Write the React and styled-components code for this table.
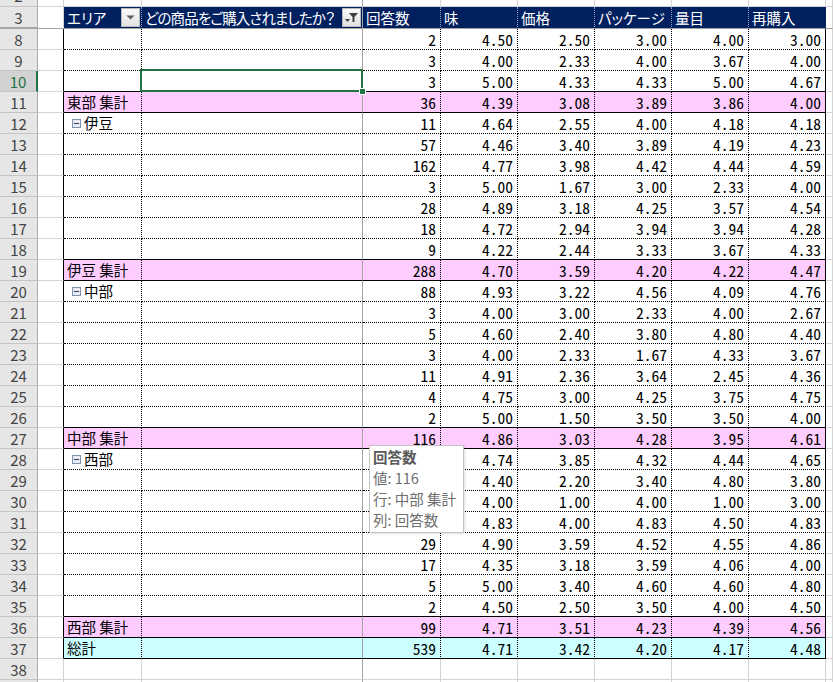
import React from "react";
import styled, { createGlobalStyle, css } from "styled-components";

const GlobalStyle = createGlobalStyle`
  html, body {
    margin: 0;
    padding: 0;
    background: #fff;
    overflow: hidden;
  }
  body {
    font-family: "Noto Sans CJK JP", "Noto Sans", sans-serif;
  }
`;

const COLS = "38px 26px 78px 221px 78px 77px 77px 77px 77px 77px 1fr";

const LINES = {
  grid: "1px solid #d4d4d4",
  dot: "1px dotted #000",
  solid: "1px solid #000",
  freeze: "1px solid #a3a3a3",
  hdot: "1px dotted #8e9abb",
  navy: "1px solid #002060",
};

const HEADERS = ["回答数", "味", "価格", "パッケージ", "量目", "再購入"];

const ROWS = [
  { n: 8, v: "2 4.50 2.50 3.00 4.00 3.00" },
  { n: 9, v: "3 4.00 2.33 4.00 3.67 4.00" },
  { n: 10, v: "3 5.00 4.33 4.33 5.00 4.67" },
  { n: 11, kind: "sub", label: "東部 集計", v: "36 4.39 3.08 3.89 3.86 4.00" },
  { n: 12, kind: "group", label: "伊豆", v: "11 4.64 2.55 4.00 4.18 4.18" },
  { n: 13, v: "57 4.46 3.40 3.89 4.19 4.23" },
  { n: 14, v: "162 4.77 3.98 4.42 4.44 4.59" },
  { n: 15, v: "3 5.00 1.67 3.00 2.33 4.00" },
  { n: 16, v: "28 4.89 3.18 4.25 3.57 4.54" },
  { n: 17, v: "18 4.72 2.94 3.94 3.94 4.28" },
  { n: 18, v: "9 4.22 2.44 3.33 3.67 4.33" },
  { n: 19, kind: "sub", label: "伊豆 集計", v: "288 4.70 3.59 4.20 4.22 4.47" },
  { n: 20, kind: "group", label: "中部", v: "88 4.93 3.22 4.56 4.09 4.76" },
  { n: 21, v: "3 4.00 3.00 2.33 4.00 2.67" },
  { n: 22, v: "5 4.60 2.40 3.80 4.80 4.40" },
  { n: 23, v: "3 4.00 2.33 1.67 4.33 3.67" },
  { n: 24, v: "11 4.91 2.36 3.64 2.45 4.36" },
  { n: 25, v: "4 4.75 3.00 4.25 3.75 4.75" },
  { n: 26, v: "2 5.00 1.50 3.50 3.50 4.00" },
  { n: 27, kind: "sub", label: "中部 集計", v: "116 4.86 3.03 4.28 3.95 4.61" },
  { n: 28, kind: "group", label: "西部", v: "34 4.74 3.85 4.32 4.44 4.65" },
  { n: 29, v: "5 4.40 2.20 3.40 4.80 3.80" },
  { n: 30, v: "1 4.00 1.00 4.00 1.00 3.00" },
  { n: 31, v: "6 4.83 4.00 4.83 4.50 4.83" },
  { n: 32, v: "29 4.90 3.59 4.52 4.55 4.86" },
  { n: 33, v: "17 4.35 3.18 3.59 4.06 4.00" },
  { n: 34, v: "5 5.00 3.40 4.60 4.60 4.80" },
  { n: 35, v: "2 4.50 2.50 3.50 4.00 4.50" },
  { n: 36, kind: "sub", label: "西部 集計", v: "99 4.71 3.51 4.23 4.39 4.56" },
  { n: 37, kind: "total", label: "総計", v: "539 4.71 3.42 4.20 4.17 4.48" },
];

const FILLS = { sub: "#ffccff", total: "#ccffff" };

const Sheet = styled.div`
  position: relative;
  width: 833px;
  height: 682px;
  overflow: hidden;
`;

const Row = styled.div`
  display: grid;
  grid-template-columns: ${COLS};
  height: ${(p) => p.$h}px;
`;

const RowHead = styled.div`
  box-sizing: border-box;
  display: flex;
  align-items: ${(p) => (p.$clip ? "flex-end" : "center")};
  justify-content: center;
  overflow: hidden;
  background: ${(p) => (p.$active ? "#d2d2d2" : "#e6e6e6")};
  color: ${(p) => (p.$active ? "#217346" : "#444")};
  border-right: ${(p) =>
    p.$active ? "2px solid #217346" : "1px solid #ababab"};
  border-bottom: ${(p) =>
    p.$thick ? "2px solid #a6a6a6" : "1px solid #c4c4c4"};
  font-size: 15px;
  line-height: 21px;
`;

const Cell = styled.div`
  box-sizing: border-box;
  display: flex;
  align-items: center;
  justify-content: ${(p) => (p.$num ? "flex-end" : "flex-start")};
  padding: ${(p) => (p.$num ? "0 4px 0 0" : `0 0 0 ${p.$indent || 3}px`)};
  border-right: ${(p) => LINES[p.$r || "grid"]};
  border-bottom: ${(p) => LINES[p.$b || "grid"]};
  background: ${(p) => p.$bg || "#fff"};
  color: #000;
  font-size: ${(p) => (p.$num ? "15.5px" : "14.5px")};
  font-feature-settings: ${(p) => (p.$num ? '"hwid"' : "normal")};
  line-height: 20px;
  white-space: nowrap;
  ${(p) =>
    p.$selected &&
    css`
      position: relative;
      z-index: 2;
      &::after {
        content: "";
        position: absolute;
        top: -2px;
        left: -2px;
        right: -1px;
        bottom: -1px;
        border: 2px solid #217346;
      }
      &::before {
        content: "";
        position: absolute;
        right: -3px;
        bottom: -3px;
        width: 5px;
        height: 5px;
        background: #217346;
        outline: 1px solid #fff;
        z-index: 3;
      }
    `}
`;

const HeadCell = styled(Cell)`
  justify-content: space-between;
  padding: 0 1px 0 3px;
  background: #002060;
  color: #fff;
  font-size: 14.5px;
  font-feature-settings: "palt";
  letter-spacing: ${(p) => (p.$tight ? "-0.9px" : "0")};
`;

const FilterButton = styled.span`
  box-sizing: border-box;
  display: flex;
  align-items: center;
  justify-content: center;
  flex: none;
  width: 19px;
  height: 19px;
  border: 1px solid #b9b9b9;
  background: linear-gradient(#fbfbfb, #e1e1e1);
`;

const Toggle = styled.svg`
  flex: none;
  margin-right: 3px;
`;

const Tip = styled.div`
  position: absolute;
  left: 369px;
  top: 445px;
  box-sizing: border-box;
  width: 95px;
  padding: 0 3px 2px 3px;
  background: #fff;
  border: 1px solid #c3c3c3;
  box-shadow: 1px 1px 2px rgba(0, 0, 0, 0.12);
  color: #6e6e6e;
  font-size: 14.5px;
  line-height: 21px;
  white-space: nowrap;
  z-index: 5;
`;

const TipTitle = styled.div`
  font-weight: 700;
  color: #595959;
`;

const Arrow = () => (
  <svg width="9" height="5" viewBox="0 0 9 5">
    <path d="M0.5 0.5h8L4.5 4.5z" fill="#5c5c5c" />
  </svg>
);

const FunnelArrow = () => (
  <svg width="15" height="13" viewBox="0 0 15 13">
    <path d="M5 2h9l-3.5 4v5h-2V6z" fill="#3f3f3f" />
    <path d="M1 8h5l-2.5 3z" fill="#3f3f3f" />
  </svg>
);

const Minus = () => (
  <Toggle width="9" height="9" viewBox="0 0 9 9">
    <rect x="0.5" y="0.5" width="8" height="8" fill="#e8ecf2" stroke="#7f90aa" />
    <path d="M2 4.5h5" stroke="#2f3d57" strokeWidth="1" />
  </Toggle>
);

const PlainRow = ({ n, h = 21, clip }) => (
  <Row $h={h}>
    <RowHead $clip={clip}>{n}</RowHead>
    <Cell />
    <Cell />
    <Cell $r="freeze" />
    {Array.from({ length: 7 }, (_, i) => (
      <Cell key={i} />
    ))}
  </Row>
);

const HeaderRow = () => (
  <Row $h={22}>
    <RowHead $thick>3</RowHead>
    <Cell $b="freeze" />
    <HeadCell $r="hdot" $b="freeze">
      エリア
      <FilterButton>
        <Arrow />
      </FilterButton>
    </HeadCell>
    <HeadCell $r="freeze" $b="freeze" $tight>
      どの商品をご購入されましたか？
      <FilterButton>
        <FunnelArrow />
      </FilterButton>
    </HeadCell>
    {HEADERS.map((h, i) => (
      <HeadCell key={h} $r={i === 5 ? "navy" : "hdot"} $b="freeze">
        {h}
      </HeadCell>
    ))}
    <Cell $b="freeze" />
  </Row>
);

const BodyRow = ({ row, bottom }) => {
  const bg = FILLS[row.kind];
  const vals = row.v.split(" ");
  return (
    <Row $h={21}>
      <RowHead $active={row.n === 10}>{row.n}</RowHead>
      <Cell $r="solid" />
      <Cell $r="dot" $b={bottom} $bg={bg} $indent={row.kind === "group" ? 8 : 3}>
        {row.kind === "group" && <Minus />}
        {row.label}
      </Cell>
      <Cell $r="freeze" $b={bottom} $bg={bg} $selected={row.n === 10} />
      {vals.map((v, i) => (
        <Cell key={i} $num $r={i === 5 ? "solid" : "dot"} $b={bottom} $bg={bg}>
          {v}
        </Cell>
      ))}
      <Cell />
    </Row>
  );
};

const edgeOf = (row, next) => {
  if (row.kind === "sub" || row.kind === "total") return "solid";
  if (next && (next.kind === "sub" || next.kind === "total")) return "solid";
  return "dot";
};

export default function App() {
  return (
    <>
      <GlobalStyle />
      <Sheet>
        <PlainRow n={2} h={7} clip />
        <HeaderRow />
        {ROWS.map((row, i) => (
          <BodyRow key={row.n} row={row} bottom={edgeOf(row, ROWS[i + 1])} />
        ))}
        <PlainRow n={38} />
        <PlainRow n={39} />
        <Tip>
          <TipTitle>回答数</TipTitle>
          <div>値: 116</div>
          <div>行: 中部 集計</div>
          <div>列: 回答数</div>
        </Tip>
      </Sheet>
    </>
  );
}
